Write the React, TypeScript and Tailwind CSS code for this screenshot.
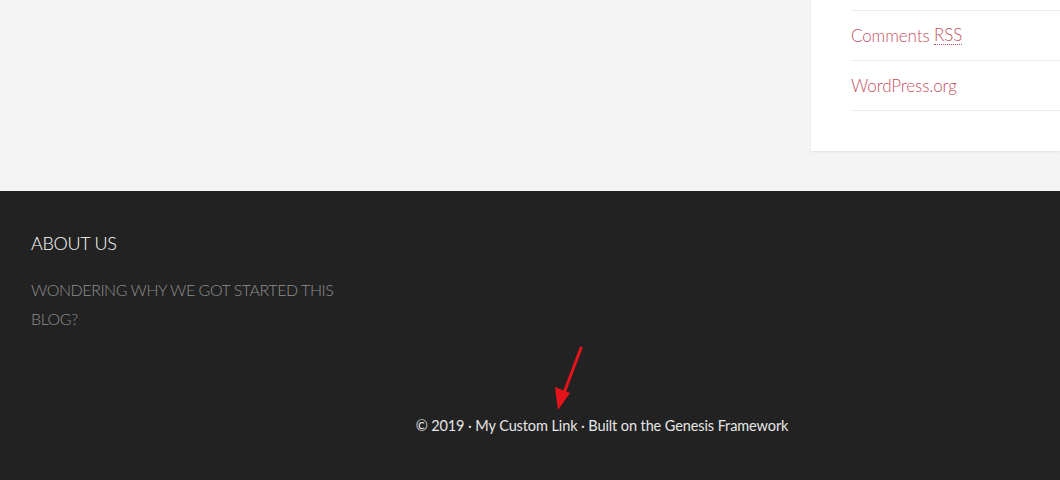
import React from "react";

export default function App() {
  const font = { fontFamily: "Lato, 'Open Sans', sans-serif" };
  return (
    <div className="w-[1060px] h-[480px] overflow-hidden" style={font}>
      <div className="h-[191px] bg-[#f4f4f4] flex justify-end">
        <div className="w-[249px] h-[151px] bg-white shadow-[0_1px_2px_rgba(0,0,0,0.08)] pl-[40px]">
          <div className="mt-[10px] border-t border-[#ececec]">
            <div className="h-[50px] border-b border-[#ececec] flex items-center text-[17px] font-light text-[#c3515f] tracking-[-0.1px]">
              Comments&nbsp;<abbr className="no-underline border-b border-dotted border-[#c3515f] leading-[18px]">RSS</abbr>
            </div>
            <div className="h-[50px] border-b border-[#ececec] flex items-center text-[17px] font-light text-[#c3515f] tracking-[-0.1px]">
              WordPress.org
            </div>
          </div>
        </div>
      </div>
      <div className="h-[289px] bg-[#222222] relative pt-[40px] pl-[31px]">
        <div className="text-[18px] text-white font-light leading-[24px] tracking-[-0.3px]">ABOUT US</div>
        <div className="mt-[20px] w-[340px] text-[16px] font-light text-[#8e8e8e] leading-[29px] tracking-[-0.45px]">
          WONDERING WHY WE GOT STARTED THIS BLOG?
        </div>
        <div className="mt-[82px] flex justify-center pl-[113px] text-[14.5px] text-[#e6e6e6] tracking-[-0.1px]">
          © 2019 · My Custom Link · Built on the Genesis Framework
        </div>
        <svg className="absolute left-[550px] top-[152px]" width="40" height="70" viewBox="0 0 40 70">
          <line x1="31" y1="5" x2="14" y2="50" stroke="#e5131a" strokeWidth="3" strokeLinecap="round" />
          <polygon points="8,67 5,44 20,50" fill="#e5131a" />
        </svg>
      </div>
    </div>
  );
}
